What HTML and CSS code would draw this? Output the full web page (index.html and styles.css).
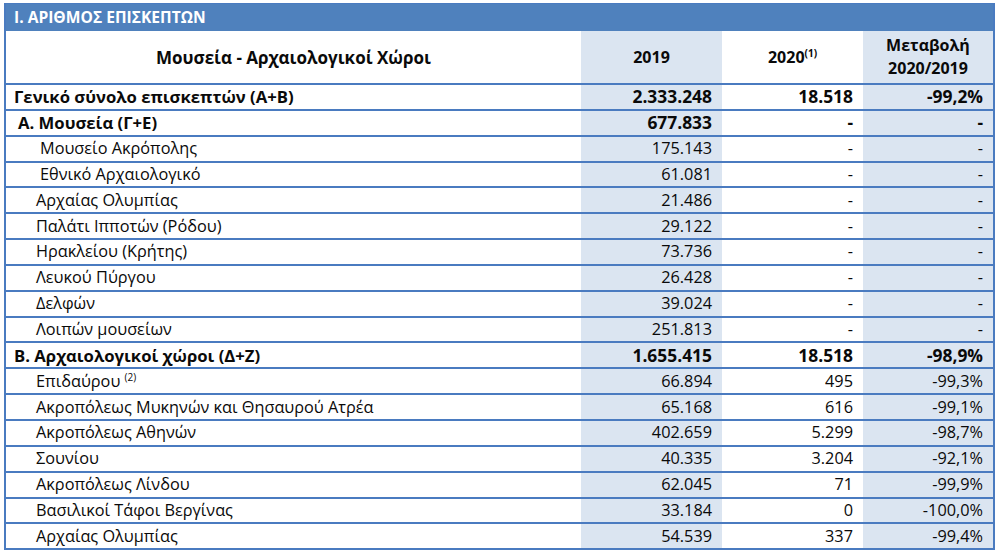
FILE: index.html
```html
<!DOCTYPE html>
<html lang="el">
<head>
<meta charset="utf-8">
<title>Αριθμός επισκεπτών</title>
<link rel="stylesheet" href="styles.css">
</head>
<body>
<div class="sheet">
  <div class="title">I. ΑΡΙΘΜΟΣ ΕΠΙΣΚΕΠΤΩΝ</div>
  <table class="grid">
    <colgroup>
      <col class="c-name">
      <col class="c-y19">
      <col class="c-y20">
      <col class="c-chg">
    </colgroup>
    <thead>
      <tr class="head">
        <th class="name-h">Μουσεία - Αρχαιολογικοί Χώροι</th>
        <th class="shade">2019</th>
        <th>2020<sup>(1)</sup></th>
        <th class="shade">Μεταβολή<br>2020/2019</th>
      </tr>
    </thead>
    <tbody>
      <tr class="bold"><td class="lv0">Γενικό σύνολο επισκεπτών (Α+Β)</td><td class="shade num">2.333.248</td><td class="num">18.518</td><td class="shade num">-99,2%</td></tr>
      <tr class="bold"><td class="lv1">Α. Μουσεία (Γ+Ε)</td><td class="shade num">677.833</td><td class="num">-</td><td class="shade num">-</td></tr>
      <tr><td class="lv3">Μουσείο Ακρόπολης</td><td class="shade">175.143</td><td>-</td><td class="shade">-</td></tr>
      <tr><td class="lv3">Εθνικό Αρχαιολογικό</td><td class="shade">61.081</td><td>-</td><td class="shade">-</td></tr>
      <tr><td class="lv2">Αρχαίας Ολυμπίας</td><td class="shade">21.486</td><td>-</td><td class="shade">-</td></tr>
      <tr><td class="lv2">Παλάτι Ιπποτών (Ρόδου)</td><td class="shade">29.122</td><td>-</td><td class="shade">-</td></tr>
      <tr><td class="lv2">Ηρακλείου (Κρήτης)</td><td class="shade">73.736</td><td>-</td><td class="shade">-</td></tr>
      <tr><td class="lv2">Λευκού Πύργου</td><td class="shade">26.428</td><td>-</td><td class="shade">-</td></tr>
      <tr><td class="lv2">Δελφών</td><td class="shade">39.024</td><td>-</td><td class="shade">-</td></tr>
      <tr><td class="lv2">Λοιπών μουσείων</td><td class="shade">251.813</td><td>-</td><td class="shade">-</td></tr>
      <tr class="bold"><td class="lv0">Β. Αρχαιολογικοί χώροι (Δ+Ζ)</td><td class="shade num">1.655.415</td><td class="num">18.518</td><td class="shade num">-98,9%</td></tr>
      <tr><td class="lv2">Επιδαύρου <sup>(2)</sup></td><td class="shade">66.894</td><td>495</td><td class="shade">-99,3%</td></tr>
      <tr><td class="lv2">Ακροπόλεως Μυκηνών και Θησαυρού Ατρέα</td><td class="shade">65.168</td><td>616</td><td class="shade">-99,1%</td></tr>
      <tr><td class="lv2">Ακροπόλεως Αθηνών</td><td class="shade">402.659</td><td>5.299</td><td class="shade">-98,7%</td></tr>
      <tr><td class="lv2">Σουνίου</td><td class="shade">40.335</td><td>3.204</td><td class="shade">-92,1%</td></tr>
      <tr><td class="lv2">Ακροπόλεως Λίνδου</td><td class="shade">62.045</td><td>71</td><td class="shade">-99,9%</td></tr>
      <tr><td class="lv2">Βασιλικοί Τάφοι Βεργίνας</td><td class="shade">33.184</td><td>0</td><td class="shade">-100,0%</td></tr>
      <tr><td class="lv2">Αρχαίας Ολυμπίας</td><td class="shade">54.539</td><td>337</td><td class="shade">-99,4%</td></tr>
    </tbody>
  </table>
</div>
</body>
</html>
```
FILE: styles.css
```css
html, body {
  margin: 0;
  padding: 0;
  background: #ffffff;
}

body {
  font-family: "Open Sans", "Noto Sans", sans-serif;
  color: #0a0a0a;
  padding: 3px 0 0 4px;
}

.sheet {
  width: 987px;
  border-left: 2px solid #4a7bc0;
  border-right: 2px solid #4a7bc0;
  border-top: 1px solid #4a7bc0;
}

.title {
  height: 27px;
  line-height: 27px;
  background: #4f81bd;
  color: #ffffff;
  font-weight: 700;
  font-size: 15.6px;
  padding-left: 8px;
}

.grid {
  border-collapse: collapse;
  table-layout: fixed;
  width: 987px;
  font-size: 16.3px;
}

.c-name { width: 575px; }
.c-y19 { width: 141px; }
.c-y20 { width: 141px; }
.c-chg { width: 130px; }

.grid th,
.grid td {
  padding: 0 10px 0 0;
  border-bottom: 2px solid #4a7bc0;
  white-space: nowrap;
}

.grid th {
  height: 52px;
  text-align: center;
  font-weight: 700;
  font-size: 16px;
  line-height: 23px;
  padding: 0;
}

.grid .name-h {
  font-size: 17px;
}

.grid td {
  height: 23.85px;
  line-height: 23px;
  text-align: right;
}

.grid td.lv0 { text-align: left; padding-left: 8px; }
.grid td.lv1 { text-align: left; padding-left: 12px; }
.grid td.lv2 { text-align: left; padding-left: 30px; }
.grid td.lv3 { text-align: left; padding-left: 34px; }

.grid .shade {
  background: #dbe5f1;
}

.bold td {
  font-weight: 700;
  font-size: 16.7px;
}

.bold td.num {
  font-size: 17.4px;
}

sup {
  font-size: 10px;
  line-height: 0;
  vertical-align: 6px;
}
```
